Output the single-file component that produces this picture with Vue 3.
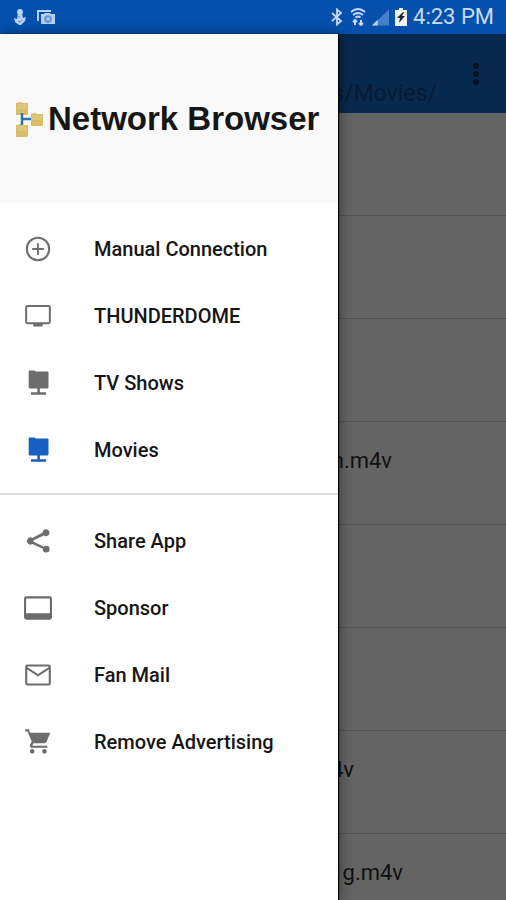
<template>
    <div class="screen">
        <header class="status-bar">
            <div class="status-group">
                <svg width="16" height="18" viewBox="0 0 16 18" fill="#b9d0f5">
                    <circle cx="8" cy="4" r="3" />
                    <path d="M6 5h4l1 5 3-1-1 4-4 4H7l-4-3-1-4 3 1z" />
                    <path d="M7 8v2M6 13l2 1 2-2" fill="none" stroke="#5f8fd0" stroke-width="1" />
                </svg>
                <svg width="18" height="15" viewBox="0 0 18 15">
                    <path d="M1 11V1h13" fill="none" stroke="#b9d0f5" stroke-width="2" />
                    <path d="M4 4h3l1-1h5l1 1h4v10H4z" fill="#b9d0f5" />
                    <circle cx="11" cy="9" r="3" fill="#9dbde9" stroke="#5f8fd0" stroke-width="1.5" />
                </svg>
            </div>
            <div class="status-group right">
                <svg width="14" height="18" viewBox="0 0 14 18" fill="none" stroke="#c5d8f5" stroke-width="1.8">
                    <path d="M2 5l9 8-4 3.500V1.500L11 5l-9 8" />
                </svg>
                <svg width="16" height="18" viewBox="0 0 16 18" fill="none" stroke="#c5d8f5" stroke-width="1.700">
                    <path d="M1 4q7-6 14 0M3 7q5-4 10 0M5.500 9.500q2.500-2 5 0" />
                    <path d="M5 17v-5M3 14l2-2 2 2M11 12v5M9 15l2 2 2-2" stroke-width="2" />
                </svg>
                <svg width="17" height="17" viewBox="0 0 18 17">
                    <path d="M18 0v17H0z" fill="#467fc9" />
                    <path d="M6 11v6H0z" fill="#c5d8f5" />
                </svg>
                <svg width="12" height="18" viewBox="0 0 12 18">
                    <path d="M4 0h4v2h4v16H0V2h4z" fill="#f1f4ee" />
                    <path d="M8 4L2 10h3l-1 5 6-7H7l2-4z" fill="#1b2430" />
                </svg>
                <span class="clock">4:23 PM</span>
            </div>
        </header>

        <div class="body">
            <main class="content">
                <div class="app-bar">
                    <h1 class="path">s/Movies/</h1>
                    <button class="more" aria-label="More options">
                        <svg width="8" height="24" viewBox="0 0 8 24" fill="#03101f">
                            <circle cx="4" cy="4" r="3" />
                            <circle cx="4" cy="12" r="3" />
                            <circle cx="4" cy="20" r="3" />
                        </svg>
                    </button>
                </div>
                <ul class="files">
                    <li v-for="(file, i) in files" :key="i" class="file">
                        <span v-if="file.name" class="file-name" :style="{ width: file.end + 'px' }">{{ file.name }}</span>
                    </li>
                </ul>
            </main>

            <aside class="drawer">
                <div class="brand">
                    <svg width="28" height="36" viewBox="0 0 28 36">
                        <g fill="#d8bc68">
                            <path d="M0 2l5-1 1 1h6v11l-1 1H0z" />
                            <path d="M15 13l5-1 1 1h6v11l-1 1H15z" />
                            <path d="M0 24l5-1 1 1h6v11l-1 1H0z" />
                        </g>
                        <g fill="#e6cf8b" opacity=".5">
                            <path d="M1 3h10v5H1zM16 14h10v5H16zM1 25h10v5H1z" />
                        </g>
                        <path d="M6 12v12M6 18h9" stroke="#2d74b3" stroke-width="2.500" fill="none" />
                    </svg>
                    <span class="brand-name">Network Browser</span>
                </div>
                <nav>
                    <ul v-for="(group, g) in groups" :key="g" class="menu">
                        <li v-for="item in group" :key="item.label">
                            <button class="menu-item" :class="{ active: item.active }">
                                <svg class="menu-icon" width="28" height="28" viewBox="0 0 24 24" fill="currentColor">
                                    <path :d="icons[item.icon]" fill-rule="evenodd" />
                                </svg>
                                <span>{{ item.label }}</span>
                            </button>
                        </li>
                    </ul>
                </nav>
            </aside>
        </div>
    </div>
</template>

<script setup>
const icons = {
    add: 'M12.800 7h-1.600v4.200H7v1.600h4.200V17h1.600v-4.200H17v-1.600h-4.200zM12 1.500a10.500 10.500 0 1 0 0 21 10.500 10.500 0 0 0 0-21zm0 19.200a8.700 8.700 0 1 1 0-17.400 8.700 8.700 0 0 1 0 17.400z',
    tv: 'M21 2.500H3a2 2 0 0 0-2 2V17a2 2 0 0 0 2 2h5v2h8v-2h5a2 2 0 0 0 2-2V4.500a2 2 0 0 0-2-2zm.3 14.800H2.700V4.200h18.600z',
    share: 'M19 16.080c-.76 0-1.440.3-1.960.77L8.200 12.700a3 3 0 0 0 0-1.400l8.750-4.110A3 3 0 1 0 16 4c0 .24.040.47.090.7L7.200 9.500a3 3 0 1 0 0 5l8.960 4.160A2.900 2.900 0 1 0 19 16.080z',
    folder: 'M4 2.200a1 1 0 0 1 1-1h4l1 1h10a1 1 0 0 1 1 1v12.500a1 1 0 0 1-1 1h-6.400v3.300H19v2H6v-2h5.400v-3.300H5a1 1 0 0 1-1-1z',
    sponsor: 'M2 2a2 2 0 0 0-2 2v16a2 2 0 0 0 2 2h20a2 2 0 0 0 2-2V4a2 2 0 0 0-2-2zm-.2 1.800h20.400v12.800H1.800z',
    mail: 'M3 3a2 2 0 0 0-2 2v14a2 2 0 0 0 2 2h18a2 2 0 0 0 2-2V5a2 2 0 0 0-2-2zm-.2 4.200L12 13.200l9.200-6v12H2.800zM3 4.800h18v.6l-9 5.800-9-5.800z',
    cart: 'M7 18a2 2 0 1 0 0 4 2 2 0 0 0 0-4zM1 1v2h2l3.600 8.590-1.350 2.450C4.520 15.370 5.480 17 7 17h13v-1.700H7.420l-.19-.67L8.100 13h9.450c.75 0 1.410-.41 1.750-1.030L22.500 4H5.210l-.94-3zM17.500 18a2 2 0 1 0 0 4 2 2 0 0 0 0-4z',
}

const groups = [
    [
        { label: 'Manual Connection', icon: 'add' },
        { label: 'THUNDERDOME', icon: 'tv' },
        { label: 'TV Shows', icon: 'folder' },
        { label: 'Movies', icon: 'folder', active: true },
    ],
    [
        { label: 'Share App', icon: 'share' },
        { label: 'Sponsor', icon: 'sponsor' },
        { label: 'Fan Mail', icon: 'mail' },
        { label: 'Remove Advertising', icon: 'cart' },
    ],
]

// end: where the file name stops in the row
const files = [
    {},
    {},
    {},
    { name: 'n.m4v', end: 392 },
    {},
    {},
    { name: '4v', end: 354 },
    { name: 'g.m4v', end: 403 },
]
</script>

<style>
body {
    margin: 0;
}
</style>

<style scoped>
.screen {
    display: flex;
    flex-direction: column;
    height: 100vh;
    overflow: hidden;
    font-family: Roboto, "Liberation Sans", sans-serif;
    background: #646464;
}

ul {
    list-style: none;
    margin: 0;
    padding: 0;
}

button {
    border: 0;
    padding: 0;
    background: none;
    font: inherit;
    cursor: pointer;
}

svg {
    display: block;
    flex: none;
}

.status-bar {
    display: flex;
    justify-content: space-between;
    align-items: center;
    flex: none;
    height: 34px;
    padding: 0 12px;
    box-sizing: border-box;
    background: #0450ac;
}

.status-group {
    display: flex;
    align-items: center;
    gap: 9px;
}

.status-group.right {
    gap: 6px;
}

.clock {
    font-size: 22px;
    line-height: 34px;
    color: #c9daf4;
}

.body {
    position: relative;
    flex: 1;
    min-height: 0;
}

.content {
    height: 100%;
    overflow: hidden;
}

.app-bar {
    display: flex;
    justify-content: space-between;
    align-items: center;
    height: 79px;
    padding-right: 16px;
    background: #08294f;
}

.path {
    align-self: flex-end;
    width: 437px;
    margin: 0;
    padding-bottom: 4px;
    font-size: 23px;
    font-weight: 400;
    line-height: 30px;
    text-align: right;
    color: #061a33;
}

.more {
    display: flex;
    justify-content: center;
    width: 28px;
}

.file {
    height: 103px;
    padding-top: 24px;
    box-sizing: border-box;
    border-bottom: 1px solid #545454;
}

.file-name {
    display: block;
    font-size: 22px;
    line-height: 30px;
    text-align: right;
    color: #101010;
}

.drawer {
    position: absolute;
    top: 0;
    bottom: 0;
    left: 0;
    width: 66.8%;
    background: #fff;
    box-shadow: 1px 0 1px #000, 2px 0 12px rgba(0, 0, 0, 0.4);
}

.brand {
    display: flex;
    align-items: center;
    gap: 4px;
    height: 169px;
    padding-left: 16px;
    background: #f9f9f9;
}

.brand-name {
    font-family: "Liberation Sans", Arial, sans-serif;
    font-size: 33px;
    font-weight: 700;
    white-space: nowrap;
    color: #161616;
}

.menu {
    padding: 12px 0 10px;
}

.menu + .menu {
    border-top: 2px solid #dedede;
}

.menu-item {
    display: flex;
    align-items: center;
    gap: 42px;
    width: 100%;
    height: 67px;
    padding-left: 24px;
    font-size: 20px;
    font-weight: 500;
    white-space: nowrap;
    color: #161616;
}

.menu-icon {
    color: #6d6d6d;
}

.active .menu-icon {
    color: #1560c0;
}
</style>
